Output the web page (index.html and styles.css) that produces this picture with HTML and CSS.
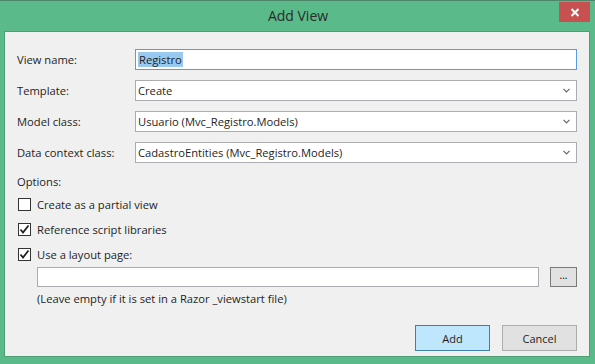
FILE: index.html
```html
<!DOCTYPE html>
<html lang="en">
<head>
    <meta charset="UTF-8">
    <title>Add View</title>
    <link rel="stylesheet" href="styles.css">
</head>
<body>
    <div class="window">
        <div class="titlebar">
            <span class="title">Add View</span>
            <button class="close" aria-label="Close">
                <svg width="10" height="9" viewBox="0 0 10 9"><path d="M1.5 1L8.5 8M8.5 1L1.5 8" stroke="#fff" stroke-width="2"/></svg>
            </button>
        </div>

        <div class="client">
            <div class="field">
                <label>View name:</label>
                <div class="textbox focused"><span class="selected">Registro</span></div>
            </div>
            <div class="field">
                <label>Template:</label>
                <div class="combo"><span>Create</span><svg class="chev" width="7" height="5" viewBox="0 0 7 5"><path d="M0.5 0.8L3.5 3.8L6.5 0.8" fill="none" stroke="#666" stroke-width="1.2"/></svg></div>
            </div>
            <div class="field">
                <label>Model class:</label>
                <div class="combo"><span>Usuario (Mvc_Registro.Models)</span><svg class="chev" width="7" height="5" viewBox="0 0 7 5"><path d="M0.5 0.8L3.5 3.8L6.5 0.8" fill="none" stroke="#666" stroke-width="1.2"/></svg></div>
            </div>
            <div class="field">
                <label>Data context class:</label>
                <div class="combo"><span>CadastroEntities (Mvc_Registro.Models)</span><svg class="chev" width="7" height="5" viewBox="0 0 7 5"><path d="M0.5 0.8L3.5 3.8L6.5 0.8" fill="none" stroke="#666" stroke-width="1.2"/></svg></div>
            </div>

            <div class="options-label">Options:</div>

            <div class="check">
                <span class="box"></span>Create as a partial view
            </div>
            <div class="check">
                <span class="box"><svg width="11" height="11" viewBox="0 0 11 11"><path d="M1.5 5.5L4 8.5L9.5 1.5" fill="none" stroke="#222" stroke-width="1.8"/></svg></span>Reference script libraries
            </div>
            <div class="check">
                <span class="box"><svg width="11" height="11" viewBox="0 0 11 11"><path d="M1.5 5.5L4 8.5L9.5 1.5" fill="none" stroke="#222" stroke-width="1.8"/></svg></span>Use a layout page:
            </div>

            <div class="layout-row">
                <div class="textbox layout"></div>
                <button class="browse">...</button>
            </div>
            <div class="hint">(Leave empty if it is set in a Razor _viewstart file)</div>

            <div class="buttons">
                <button class="btn default">Add</button>
                <button class="btn">Cancel</button>
            </div>
        </div>
    </div>
</body>
</html>
```

FILE: styles.css
```css
html, body {
    margin: 0;
    padding: 0;
}
body {
    font-family: "Open Sans", "Noto Sans", sans-serif;
    font-size: 11.2px;
    color: #1e1e1e;
    background: #5aba89;
}
.window {
    width: 595px;
    height: 364px;
    box-sizing: border-box;
    border-top: 1px solid #4e8467;
    background: #5aba89;
    padding: 0 5px 7px 4px;
    display: flex;
    flex-direction: column;
}
.titlebar {
    height: 30px;
    position: relative;
    display: flex;
    justify-content: center;
    align-items: center;
}
.title {
    font-size: 14px;
    color: #2b2b2b;
    margin-left: 2px;
    margin-top: -1px;
}
.close {
    position: absolute;
    top: 1px;
    right: 0;
    width: 31px;
    height: 20px;
    background: #c75050;
    border: none;
    padding: 0;
    display: flex;
    align-items: center;
    justify-content: center;
}
.client {
    flex: 1;
    background: #f0f0f0;
    border: 1px solid #4f9d75;
    padding: 17px 12px 0 12px;
    display: flex;
    flex-direction: column;
}
.field {
    display: flex;
    align-items: center;
    margin-bottom: 10px;
}
.field label {
    width: 118px;
    flex: none;
}
.textbox, .combo {
    flex: 1;
    height: 21px;
    box-sizing: border-box;
    background: #fff;
    border: 1px solid #abadb3;
    display: flex;
    align-items: center;
    padding: 0 4px 0 2px;
}
.textbox.focused {
    border-color: #569de5;
}
.selected {
    background: #99c9ef;
    padding: 0 1px;
    line-height: 15px;
}
.combo span {
    flex: 1;
}
.chev {
    margin-right: 2px;
}
.options-label {
    margin-top: 1px;
    height: 16px;
    line-height: 16px;
}
.check {
    display: flex;
    align-items: center;
    height: 13px;
    margin-top: 8px;
    margin-bottom: 4px;
}
.box {
    width: 13px;
    height: 13px;
    box-sizing: border-box;
    border: 1px solid #333;
    background: #fff;
    margin-left: 1px;
    margin-right: 6px;
    display: flex;
    align-items: center;
    justify-content: center;
}
.layout-row {
    display: flex;
    align-items: center;
    margin-top: 2px;
    padding-left: 20px;
}
.textbox.layout {
    height: 20px;
    flex: 1;
}
.browse {
    width: 27px;
    height: 20px;
    margin-left: 11px;
    background: #e1e1e1;
    border: 1px solid #7a7a7a;
    font-family: inherit;
    font-size: 10px;
    line-height: 10px;
    padding: 0 0 4px;
}
.hint {
    padding-left: 20px;
    margin-top: 4px;
    height: 16px;
    line-height: 16px;
}
.buttons {
    display: flex;
    justify-content: flex-end;
    gap: 12px;
    margin-top: 18px;
}
.btn {
    width: 75px;
    height: 26px;
    background: #e1e1e1;
    border: 1px solid #adadad;
    font-family: inherit;
    font-size: 11px;
    color: #1e1e1e;
}
.btn.default {
    background: #bee6fd;
    border-color: #3c7fb1;
}
```
